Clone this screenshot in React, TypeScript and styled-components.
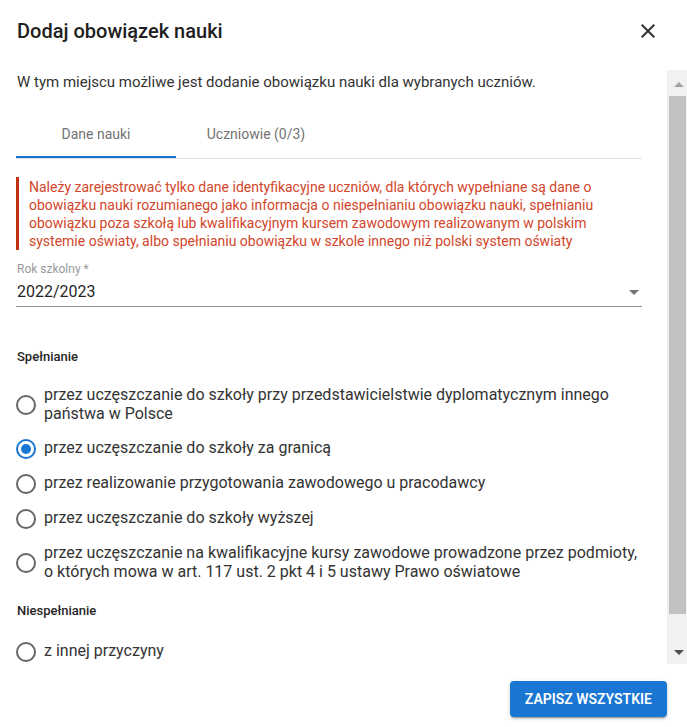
import React from "react";
import styled, { createGlobalStyle } from "styled-components";

const GlobalStyle = createGlobalStyle`
  html, body { margin: 0; padding: 0; background: #ffffff; }
  body { font-family: Roboto, "Liberation Sans", Arial, sans-serif; color: #212121; }
  * { box-sizing: border-box; }
`;

const Dialog = styled.div`
  width: 687px;
  height: 727px;
  background: #fff;
  display: flex;
  flex-direction: column;
`;

const Header = styled.div`
  height: 70px;
  padding: 16px 27px 0 17px;
  display: flex;
  justify-content: space-between;
  align-items: flex-start;
`;

const Title = styled.h2`
  margin: 0;
  font-size: 20px;
  line-height: 30px;
  font-weight: 500;
  color: #212121;
`;

const CloseButton = styled.button`
  margin-top: 3px;
  width: 24px;
  height: 24px;
  padding: 0;
  border: none;
  background: transparent;
  display: flex;
  align-items: center;
  justify-content: center;
  cursor: pointer;
`;

const Body = styled.div`
  height: 594px;
  display: flex;
`;

const ScrollArea = styled.div`
  flex: 1;
  min-width: 0;
  overflow: hidden;
  padding: 2px 25px 24px 16px;
`;

const Scrollbar = styled.div`
  flex: 0 0 20px;
  width: 20px;
  background: #f1f1f1;
  display: flex;
  flex-direction: column;
`;

const ScrollButton = styled.div<{ $dir: "up" | "down" }>`
  height: 26px;
  display: flex;
  align-items: center;
  justify-content: flex-start;
  padding-left: 7px;
  &::before {
    content: "";
    width: 0;
    height: 0;
    border-left: 5px solid transparent;
    border-right: 5px solid transparent;
    ${(p) =>
      p.$dir === "up"
        ? "border-bottom: 5px solid #a3a3a3; margin-top: 2px;"
        : "border-top: 5px solid #505050; margin-top: 3px;"}
  }
`;

const ScrollThumb = styled.div`
  height: 518px;
  margin: 0 1px 0 2px;
  background: #c1c1c1;
`;

const ScrollSpacer = styled.div`
  flex: 1;
`;

const Description = styled.p`
  margin: 0;
  font-size: 15px;
  line-height: 20px;
  color: #333;
  padding-left: 1px;
`;

const Tabs = styled.div`
  margin-top: 18px;
  display: flex;
  border-bottom: 1px solid #e0e0e0;
`;

const Tab = styled.div<{ $active?: boolean }>`
  position: relative;
  width: 160px;
  height: 48px;
  display: flex;
  align-items: center;
  justify-content: center;
  font-size: 14px;
  color: #737373;
  &::after {
    content: "";
    display: ${(p) => (p.$active ? "block" : "none")};
    position: absolute;
    left: 0;
    right: 0;
    bottom: 0;
    height: 2px;
    background: #1976d2;
  }
`;

const Alert = styled.div`
  margin-top: 18px;
  border-left: 3px solid #c0320f;
  padding: 1px 0 0 10px;
  font-size: 14px;
  line-height: 18px;
  color: #d2462a;
`;

const Field = styled.div`
  margin-top: 12px;
  border-bottom: 1px solid #8f8f8f;
  padding-bottom: 2px;
  padding-left: 1px;
`;

const FieldLabel = styled.div`
  font-size: 12px;
  line-height: 14px;
  color: #9a9a9a;
`;

const FieldValueRow = styled.div`
  margin-top: 4px;
  display: flex;
  justify-content: space-between;
  align-items: center;
  font-size: 16px;
  line-height: 24px;
  color: #262626;
`;

const ArrowIcon = styled.svg`
  margin-right: -4px;
`;

const SectionTitle = styled.div<{ $top: number; $bottom: number }>`
  margin-top: ${(p) => p.$top}px;
  margin-bottom: ${(p) => p.$bottom}px;
  padding-left: 1px;
  font-size: 13px;
  line-height: 16px;
  font-weight: 500;
  color: #262626;
`;

const RadioRow = styled.label`
  display: flex;
  align-items: center;
  gap: 8px;
  padding: 7.5px 0;
  font-size: 16px;
  line-height: 19px;
  color: #333;
  cursor: pointer;
`;

const RadioCircle = styled.span<{ $checked?: boolean }>`
  flex: 0 0 20px;
  width: 20px;
  height: 20px;
  position: relative;
  top: 1px;
  border-radius: 50%;
  border: 2px solid ${(p) => (p.$checked ? "#1976d2" : "#666")};
  display: flex;
  align-items: center;
  justify-content: center;
  &::after {
    content: "";
    display: ${(p) => (p.$checked ? "block" : "none")};
    width: 10px;
    height: 10px;
    border-radius: 50%;
    background: #1976d2;
  }
`;

const Footer = styled.div`
  padding: 17px 20px 0 0;
  display: flex;
  justify-content: flex-end;
`;

const PrimaryButton = styled.button`
  height: 36px;
  padding: 0 15px;
  border: none;
  border-radius: 4px;
  background: #1976d2;
  color: #fff;
  white-space: nowrap;
  font-family: Roboto, "Liberation Sans", Arial, sans-serif;
  font-size: 14px;
  font-weight: 600;
  text-transform: uppercase;
  box-shadow: 0 3px 1px -2px rgba(0,0,0,0.2), 0 2px 2px 0 rgba(0,0,0,0.14), 0 1px 5px 0 rgba(0,0,0,0.12);
  cursor: pointer;
`;

const fulfilling = [
  "przez uczęszczanie do szkoły przy przedstawicielstwie dyplomatycznym innego państwa w Polsce",
  "przez uczęszczanie do szkoły za granicą",
  "przez realizowanie przygotowania zawodowego u pracodawcy",
  "przez uczęszczanie do szkoły wyższej",
  "przez uczęszczanie na kwalifikacyjne kursy zawodowe prowadzone przez podmioty, o których mowa w art. 117 ust. 2 pkt 4 i 5 ustawy Prawo oświatowe",
];

export default function App() {
  const selected = 1;
  return (
    <>
      <GlobalStyle />
      <Dialog>
        <Header>
          <Title>Dodaj obowiązek nauki</Title>
          <CloseButton aria-label="Zamknij">
            <svg width="24" height="24" viewBox="0 0 24 24">
              <path
                d="M19 6.41 17.59 5 12 10.59 6.41 5 5 6.41 10.59 12 5 17.59 6.41 19 12 13.41 17.59 19 19 17.59 13.41 12z"
                fill="#333"
              />
            </svg>
          </CloseButton>
        </Header>
        <Body>
          <ScrollArea>
            <Description>
              W tym miejscu możliwe jest dodanie obowiązku nauki dla wybranych uczniów.
            </Description>
            <Tabs>
              <Tab $active>Dane nauki</Tab>
              <Tab>Uczniowie (0/3)</Tab>
            </Tabs>
            <Alert>
              Należy zarejestrować tylko dane identyfikacyjne uczniów, dla których wypełniane są dane o
              obowiązku nauki rozumianego jako informacja o niespełnianiu obowiązku nauki, spełnianiu
              obowiązku poza szkołą lub kwalifikacyjnym kursem zawodowym realizowanym w polskim
              systemie oświaty, albo spełnianiu obowiązku w szkole innego niż polski system oświaty
            </Alert>
            <Field>
              <FieldLabel>Rok szkolny *</FieldLabel>
              <FieldValueRow>
                <span>2022/2023</span>
                <ArrowIcon width="24" height="24" viewBox="0 0 24 24">
                  <path d="M7 10l5 5 5-5z" fill="#757575" />
                </ArrowIcon>
              </FieldValueRow>
            </Field>
            <SectionTitle $top={42} $bottom={12}>Spełnianie</SectionTitle>
            {fulfilling.map((t, i) => (
              <RadioRow key={i}>
                <RadioCircle $checked={i === selected} />
                <span>{t}</span>
              </RadioRow>
            ))}
            <SectionTitle $top={15} $bottom={14}>Niespełnianie</SectionTitle>
            <RadioRow>
              <RadioCircle />
              <span>z innej przyczyny</span>
            </RadioRow>
          </ScrollArea>
          <Scrollbar aria-hidden="true">
            <ScrollButton $dir="up" />
            <ScrollThumb />
            <ScrollSpacer />
            <ScrollButton $dir="down" />
          </Scrollbar>
        </Body>
        <Footer>
          <PrimaryButton>Zapisz wszystkie</PrimaryButton>
        </Footer>
      </Dialog>
    </>
  );
}
